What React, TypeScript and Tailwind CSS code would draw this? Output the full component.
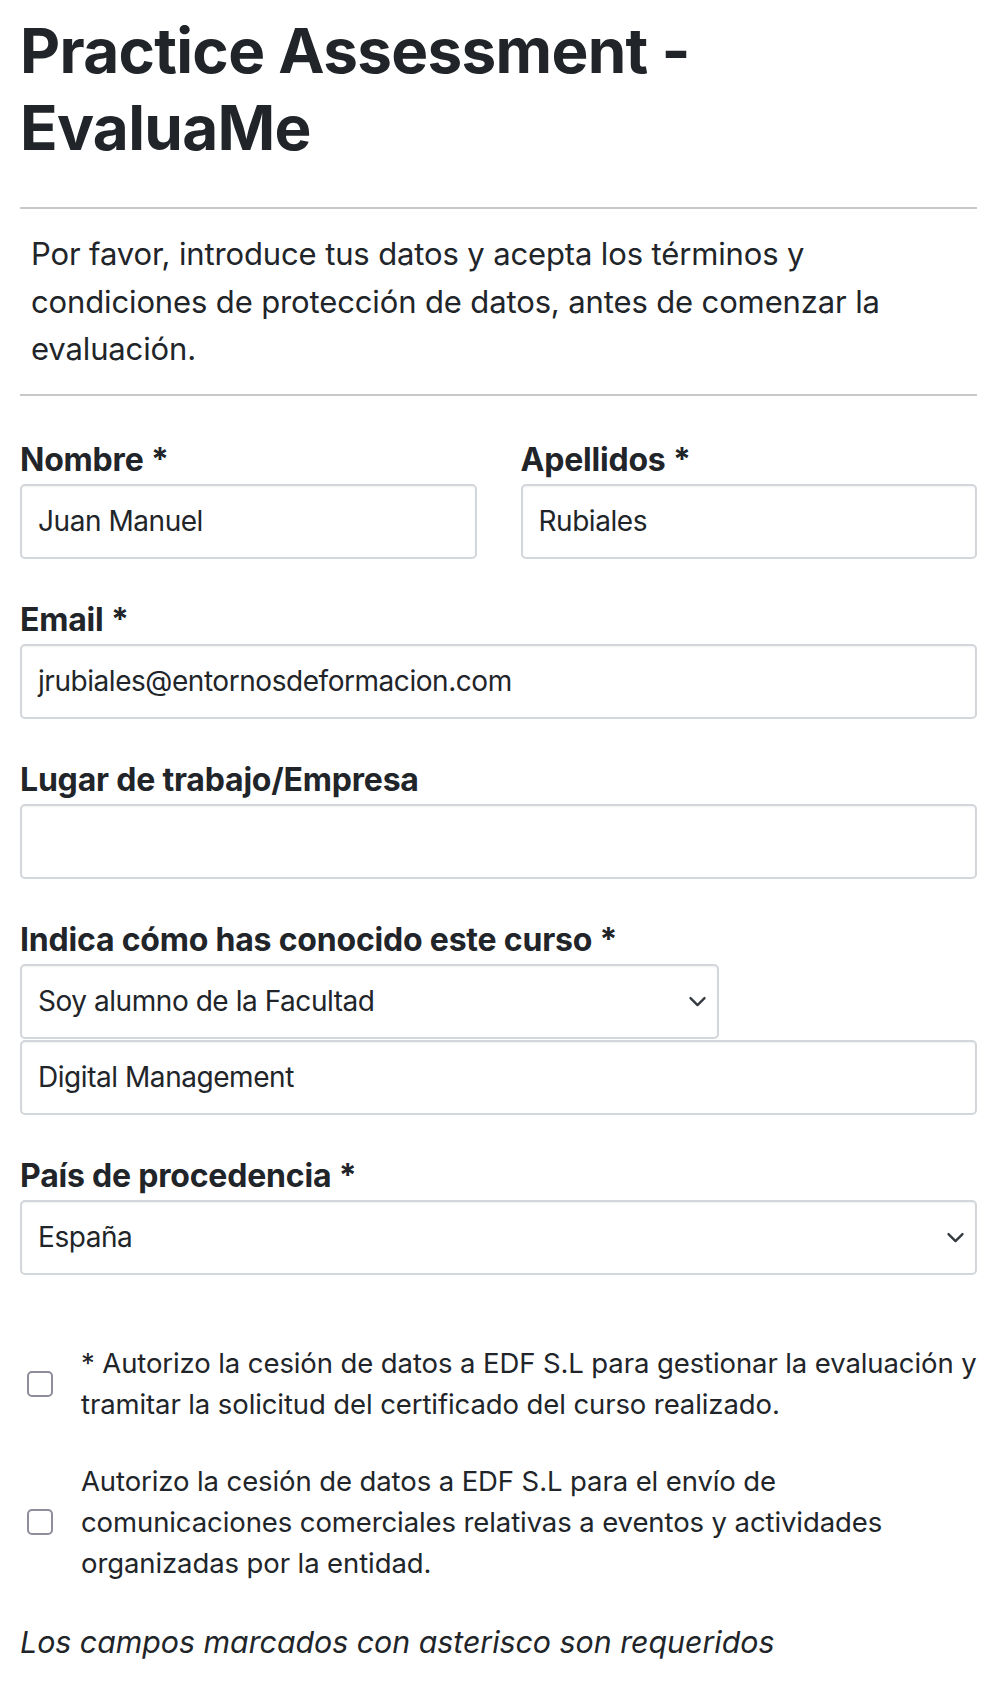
import React from 'react';

const labelCls = "block h-[40px] text-[32px] font-bold leading-[40px] tracking-[-0.2px] text-[#212529]";
const boxCls =
  "flex h-[75px] items-center rounded-[5px] border-2 border-[#d3d6da] bg-white px-[16px] text-[28px] tracking-[-0.45px] text-[#212529] shadow-[inset_0_1px_2px_rgba(0,0,0,0.06)]";

const Field: React.FC<{ label: string; value?: string; className?: string }> = ({ label, value, className }) => (
  <div className={className}>
    <label className={labelCls}>{label}</label>
    <div className={`${boxCls} mt-[4px] w-full`}>
      <span className="whitespace-nowrap">{value}</span>
    </div>
  </div>
);

const Chevron: React.FC = () => (
  <svg width="19" height="14" viewBox="0 0 16 12" fill="none" className="shrink-0">
    <path d="M2 3.5l6 6 6-6" stroke="#343a40" strokeWidth="2" strokeLinecap="round" strokeLinejoin="round" />
  </svg>
);

const SelectBox: React.FC<{ value: string; className: string }> = ({ value, className }) => (
  <div className={`${boxCls} justify-between pr-[10px] ${className}`}>
    <span className="whitespace-nowrap">{value}</span>
    <Chevron />
  </div>
);

const Consent: React.FC<{ lines: string[]; className?: string }> = ({ lines, className }) => (
  <div className={`flex items-center ${className ?? ''}`}>
    <div className="ml-[7px] mr-[28px] h-[26px] w-[26px] shrink-0 rounded-[5px] border-2 border-[#8f8c9b] bg-white" />
    <p className="text-[27.5px] leading-[41px] tracking-[-0.1px] text-[#212529]">
      {lines.map((l, i) => (
        <span key={i} className="block whitespace-nowrap">{l}</span>
      ))}
    </p>
  </div>
);

const App: React.FC = () => {
  return (
    <div className="min-h-[1688px] bg-white pl-[20px] pr-[25px] pt-[12px] pb-[20px] font-['Inter',sans-serif] text-[#212529]">
      <h1 className="text-[62px] font-bold leading-[77px] tracking-[-0.7px]">
        Practice Assessment -<br />
        EvaluaMe
      </h1>

      <div className="mt-[41px] h-[2px] bg-[#c8c9ca]" />
      <p className="py-[21px] pl-[11px] text-[31px] leading-[47.5px] tracking-[-0.13px]">
        <span className="block whitespace-nowrap">Por favor, introduce tus datos y acepta los términos y</span>
        <span className="block whitespace-nowrap">condiciones de protección de datos, antes de comenzar la</span>
        <span className="block whitespace-nowrap">evaluación.</span>
      </p>
      <div className="h-[2px] bg-[#c8c9ca]" />

      <div className="mt-[44px] grid grid-cols-2 gap-x-[44px]">
        <Field label="Nombre *" value="Juan Manuel" />
        <Field label="Apellidos *" value="Rubiales" />
      </div>

      <Field className="mt-[41px]" label="Email *" value="jrubiales@entornosdeformacion.com" />
      <Field className="mt-[41px]" label="Lugar de trabajo/Empresa" value="" />

      <div className="mt-[41px]">
        <label className={labelCls}>Indica cómo has conocido este curso *</label>
        <SelectBox className="mt-[4px] w-[699px]" value="Soy alumno de la Facultad" />
        <div className={`${boxCls} mt-[1px] w-full`}>
          <span className="whitespace-nowrap">Digital Management</span>
        </div>
      </div>

      <div className="mt-[41px]">
        <label className={labelCls}>País de procedencia *</label>
        <SelectBox className="mt-[4px] w-full" value="España" />
      </div>

      <Consent
        className="mt-[68px]"
        lines={[
          '* Autorizo la cesión de datos a EDF S.L para gestionar la evaluación y',
          'tramitar la solicitud del certificado del curso realizado.',
        ]}
      />
      <Consent
        className="mt-[36px]"
        lines={[
          'Autorizo la cesión de datos a EDF S.L para el envío de',
          'comunicaciones comerciales relativas a eventos y actividades',
          'organizadas por la entidad.',
        ]}
      />

      <p className="mt-[34px] text-[30.3px] italic leading-[48px]">
        Los campos marcados con asterisco son requeridos
      </p>
    </div>
  );
};

export default App;
